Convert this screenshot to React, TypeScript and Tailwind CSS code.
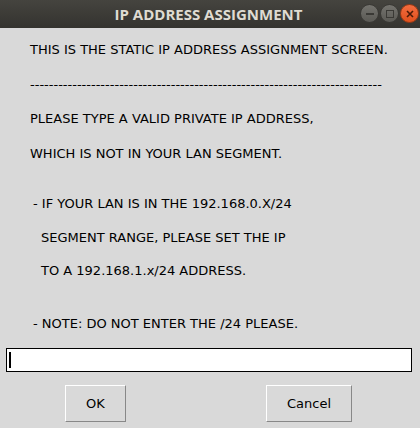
import React from "react";

const font = { fontFamily: '"DejaVu Sans", sans-serif' };

function Line({ h, pl, children }: { h: string; pl: string; children: React.ReactNode }) {
  return (
    <div className={`flex items-center whitespace-nowrap ${h} ${pl}`}>{children}</div>
  );
}

export default function App() {
  const dashes = "-".repeat(75);
  return (
    <div className="w-[420px] h-[428px] bg-[#d9d9d9] overflow-hidden flex flex-col" style={font}>
      <div className="h-[28px] shrink-0 relative flex items-center justify-center bg-gradient-to-b from-[#45443f] to-[#34332f]">
        <span className="text-[15px] font-bold text-[#dfdbd2] ml-[-3px]" style={{ fontFamily: '"Open Sans", "DejaVu Sans", sans-serif' }}>
          IP ADDRESS ASSIGNMENT
        </span>
        <div className="absolute right-[1px] top-[4px] flex gap-[1px]">
          <div className="w-[19px] h-[19px] rounded-full bg-gradient-to-b from-[#74736e] to-[#5a5954] border border-[#3a3935] flex items-center justify-center">
            <div className="w-[8px] h-[2px] bg-[#3a3935]" />
          </div>
          <div className="w-[19px] h-[19px] rounded-full bg-gradient-to-b from-[#74736e] to-[#5a5954] border border-[#3a3935] flex items-center justify-center">
            <div className="w-[8px] h-[8px] border-[1.5px] border-[#3a3935]" />
          </div>
          <div className="w-[19px] h-[19px] rounded-full bg-gradient-to-b from-[#f26c3e] to-[#e0501c] border border-[#9c3a15] flex items-center justify-center">
            <svg width="8" height="8" viewBox="0 0 8 8">
              <path d="M1 1 L7 7 M7 1 L1 7" stroke="#4a1a08" strokeWidth="1.6" />
            </svg>
          </div>
        </div>
      </div>
      <div className="flex flex-col text-[13px] text-black pt-[5px]">
        <Line h="h-[34px]" pl="pl-[30px]">THIS IS THE STATIC IP ADDRESS ASSIGNMENT SCREEN.</Line>
        <Line h="h-[35px]" pl="pl-[30px]">{dashes}</Line>
        <Line h="h-[34px]" pl="pl-[30px]">PLEASE TYPE A VALID PRIVATE IP ADDRESS,</Line>
        <Line h="h-[35px]" pl="pl-[30px]">WHICH IS NOT IN YOUR LAN SEGMENT.</Line>
        <div className="h-[16px]" />
        <Line h="h-[34px]" pl="pl-[33px]">- IF YOUR LAN IS IN THE 192.168.0.X/24</Line>
        <Line h="h-[33px]" pl="pl-[41px]">SEGMENT RANGE, PLEASE SET THE IP</Line>
        <Line h="h-[33px]" pl="pl-[41px]">TO A 192.168.1.x/24 ADDRESS.</Line>
        <div className="h-[20px]" />
        <Line h="h-[33px]" pl="pl-[33px]">- NOTE: DO NOT ENTER THE /24 PLEASE.</Line>
      </div>
      <div className="mt-[8px] ml-[6px] w-[406px] h-[24px] border border-black bg-white flex items-center pl-[2px]">
        <div className="w-[2px] h-[16px] bg-black" />
      </div>
      <div className="flex mt-[13px]">
        <button className="ml-[65px] w-[61px] h-[37px] bg-[#d9d9d9] border border-t-white border-l-white border-r-[#888] border-b-[#888] text-[13px] text-black">
          OK
        </button>
        <button className="ml-[140px] w-[86px] h-[37px] bg-[#d9d9d9] border border-t-white border-l-white border-r-[#888] border-b-[#888] text-[13px] text-black">
          Cancel
        </button>
      </div>
    </div>
  );
}
